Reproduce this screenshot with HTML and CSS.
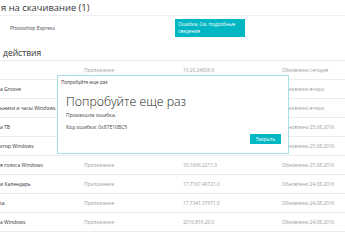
FILE: index.html
```html
<!DOCTYPE html>
<html lang="ru">
<head>
<meta charset="utf-8">
<link rel="stylesheet" href="styles.css">
</head>
<body>
<div class="page">
  <div class="section-title">я на скачивание (1)</div>
  <div class="pending-row">
    <div class="pending-name">Photoshop Express</div>
    <div class="error-btn">Ошибка. См. подробные сведения</div>
  </div>
  <div class="section-sub">действия</div>
  <div class="table">
    <div class="row"><span class="c-name"></span><span class="c-type">Приложение</span><span class="c-ver">19.20.24006.0</span><span class="c-stat">Обновлено сегодня</span></div>
    <div class="row"><span class="c-name">а Groove</span><span class="c-type"></span><span class="c-ver"></span><span class="c-stat">Обновлено вчера</span></div>
    <div class="row"><span class="c-name">ьники и часы Windows</span><span class="c-type"></span><span class="c-ver"></span><span class="c-stat">Обновлено вчера</span></div>
    <div class="row"><span class="c-name">а ТВ</span><span class="c-type"></span><span class="c-ver"></span><span class="c-stat">Обновлено 25.08.2016</span></div>
    <div class="row"><span class="c-name">ктор Windows</span><span class="c-type"></span><span class="c-ver"></span><span class="c-stat">Обновлено 25.08.2016</span></div>
    <div class="row"><span class="c-name">я голоса Windows</span><span class="c-type">Приложение</span><span class="c-ver">10.1606.2211.0</span><span class="c-stat">Обновлено 25.08.2016</span></div>
    <div class="row"><span class="c-name">и Календарь</span><span class="c-type">Приложение</span><span class="c-ver">17.7167.40721.0</span><span class="c-stat">Обновлено 24.08.2016</span></div>
    <div class="row"><span class="c-name">ta</span><span class="c-type">Приложение</span><span class="c-ver">17.7341.37671.0</span><span class="c-stat">Обновлено 24.08.2016</span></div>
    <div class="row"><span class="c-name">а Windows</span><span class="c-type">Приложение</span><span class="c-ver">2016.816.20.0</span><span class="c-stat">Обновлено 24.08.2016</span></div>
    <div class="row"><span class="c-name"></span><span class="c-type"></span><span class="c-ver"></span><span class="c-stat"></span></div>
  </div>

  <div class="dialog">
    <div class="dlg-caption">Попробуйте еще раз</div>
    <div class="dlg-body">
      <div class="dlg-title">Попробуйте еще раз</div>
      <div class="dlg-text">Произошла ошибка.</div>
      <div class="dlg-code">Код ошибки: 0x87E10BC5</div>
      <div class="dlg-actions"><span class="dlg-btn">Закрыть</span></div>
    </div>
  </div>
</div>
</body>
</html>
```

FILE: styles.css
```css
html, body {
  margin: 0;
  padding: 0;
  background: #ffffff;
}
body {
  width: 345px;
  height: 240px;
  overflow: hidden;
  font-family: "Open Sans", "Noto Sans", sans-serif;
  color: #222222;
}
.page {
  position: relative;
  width: 345px;
  height: 240px;
  overflow: hidden;
}
.section-title {
  height: 15px;
  line-height: 15px;
  font-size: 9.4px;
  padding-left: 1px;
  color: #333333;
  border-bottom: 1px solid #efefef;
  white-space: nowrap;
}
.pending-row {
  display: flex;
  align-items: center;
  height: 24px;
}
.pending-name {
  width: 165px;
  padding-left: 10px;
  font-size: 5px;
  color: #444444;
}
.error-btn {
  height: 18px;
  padding: 2px 3px;
  box-sizing: border-box;
  width: 70px;
  background: #00b7c3;
  color: #ffffff;
  font-size: 4.8px;
  line-height: 7px;
}
.section-sub {
  height: 20px;
  line-height: 25px;
  font-size: 8.5px;
  margin-left: 3px;
  color: #333333;
}
.table {
  border-top: 1px solid #ececec;
}
.row {
  display: grid;
  grid-template-columns: 84px 99px 99px 1fr;
  height: 18px;
  align-items: center;
  border-bottom: 1px solid #ececec;
  font-size: 4.8px;
  white-space: nowrap;
}
.c-name {
  color: #333333;
  font-size: 5px;
}
.c-type, .c-ver, .c-stat {
  color: #9a9a9a;
}
.dialog {
  position: absolute;
  left: 57px;
  top: 75px;
  width: 232px;
  height: 79px;
  box-sizing: border-box;
  border: 1px solid #a6e1e4;
  background: #ffffff;
}
.dlg-caption {
  font-size: 4.6px;
  color: #333333;
  padding: 3px 0 0 3px;
  height: 9px;
  line-height: 7px;
}
.dlg-body {
  padding: 0 7px 0 8px;
}
.dlg-title {
  font-size: 12.3px;
  font-weight: 300;
  line-height: 16px;
  margin-top: 6px;
  color: #222222;
}
.dlg-text, .dlg-code {
  font-size: 5px;
  line-height: 8px;
  color: #444444;
}
.dlg-text {
  margin-top: 1px;
}
.dlg-code {
  margin-top: 4px;
}
.dlg-actions {
  display: flex;
  justify-content: flex-end;
  margin-top: 3px;
}
.dlg-btn {
  width: 31px;
  height: 10px;
  line-height: 10px;
  text-align: center;
  background: #00b7c3;
  color: #ffffff;
  font-size: 4.8px;
}
```
